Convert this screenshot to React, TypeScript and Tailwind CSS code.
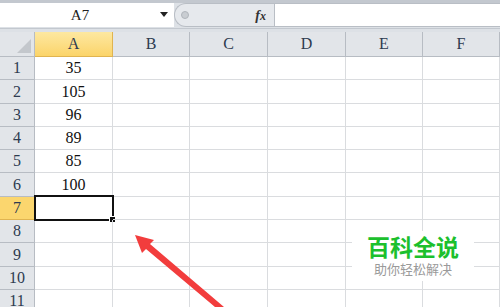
import React from 'react';

const cols = ['A', 'B', 'C', 'D', 'E', 'F'];
const colWidths = [78, 77, 78, 78, 77, 77];
const rowHeights = [23, 24, 23, 23, 23, 24, 23, 23, 24, 23, 23];
const values: Record<number, string> = { 1: '35', 2: '105', 3: '96', 4: '89', 5: '85', 6: '100' };

const serif = { fontFamily: '"Liberation Serif", "DejaVu Serif", serif' };
const cjk = { fontFamily: '"Noto Sans CJK SC", sans-serif' };

const FormulaBar = () => (
  <div className="h-[32px] bg-[#dde1e6] border-t-[3px] border-[#c3c8cf] flex flex-col">
    <div className="h-[24px] flex items-stretch">
      {/* name box */}
      <div className="w-[174px] bg-white flex items-center relative">
        <span className="w-[160px] text-center text-[15px] text-[#222]" style={serif}>
          A7
        </span>
        <span className="absolute left-[160px] top-[9px] w-0 h-0 border-l-[4px] border-r-[4px] border-t-[5px] border-l-transparent border-r-transparent border-t-[#222]" />
      </div>
      {/* splitter + fx */}
      <div className="w-[100px] bg-[#e6e9ed] flex items-center rounded-l-full border-l border-t border-b border-[#b9bec5]">
        <span className="ml-[6px] w-[8px] h-[8px] rounded-full bg-[#c9cdd2] border border-[#b0b5bb]" />
        <span className="ml-auto mr-[8px] text-[14px] italic font-bold text-[#333]" style={serif}>
          f<span className="text-[12px]">x</span>
        </span>
      </div>
      <div className="flex-1 bg-white border-l border-t border-b border-[#b9bec5]" />
    </div>
    <div className="h-[1px] mt-[1px] bg-[#c3c8cf]" />
  </div>
);

export default function App() {
  return (
    <div className="w-[500px] h-[307px] overflow-hidden bg-white relative" style={serif}>
      <FormulaBar />
      <div
        className="grid"
        style={{ gridTemplateColumns: `35px ${colWidths.map((w) => w + 'px').join(' ')}` }}
      >
        {/* header row */}
        <div className="h-[25px] bg-[#e2e5e9] border-r border-b border-[#b7bcc3] flex items-end justify-end p-[3px]">
          <svg width="14" height="14" viewBox="0 0 14 14">
            <polygon points="14,0 14,14 0,14" fill="#c3c7cc" />
          </svg>
        </div>
        {cols.map((c) => (
          <div
            key={c}
            className={
              c === 'A'
                ? 'h-[25px] flex items-center justify-center text-[16px] text-[#2d3b50] border-r border-b border-[#e0b450] bg-gradient-to-b from-[#fde8a0] to-[#fbd469]'
                : 'h-[25px] flex items-center justify-center text-[16px] text-[#2d3b50] border-r border-b border-[#b7bcc3] bg-[#e2e5e9]'
            }
          >
            {c}
          </div>
        ))}
        {rowHeights.map((h, i) => {
          const r = i + 1;
          return (
            <React.Fragment key={r}>
              <div
                className={
                  r === 7
                    ? 'flex items-center justify-center text-[16px] text-[#2d3b50] border-r border-b border-[#e0b450] bg-[#fbd66e]'
                    : 'flex items-center justify-center text-[16px] text-[#2d3b50] border-r border-b border-[#b7bcc3] bg-[#e2e5e9]'
                }
                style={{ height: h }}
              >
                {r}
              </div>
              {cols.map((c) => (
                <div
                  key={c}
                  className="flex items-center justify-center text-[16px] text-[#111] border-r border-b border-[#dadcdf] relative"
                  style={{ height: h }}
                >
                  {c === 'A' && values[r]}
                  {c === 'A' && r === 7 && (
                    <>
                      <div className="absolute left-[-1px] top-[-2px] right-[-2px] bottom-[-2px] border-[2px] border-[#111]" />
                      <div className="absolute right-[-4px] bottom-[-4px] w-[7px] h-[7px] bg-[#111] border border-white" />
                    </>
                  )}
                </div>
              ))}
            </React.Fragment>
          );
        })}
      </div>

      {/* red arrow annotation */}
      <svg className="absolute left-0 top-0 pointer-events-none" width="500" height="307" viewBox="0 0 500 307">
        <polygon
          points="135,235 154,240 150,244 224,307 215,307 146,249 142,253"
          fill="#f23d3d"
        />
      </svg>

      {/* watermark */}
      <div className="absolute left-[352px] top-[231px] w-[122px] h-[50px] bg-white flex flex-col items-center">
        <span className="text-[23px] leading-[30px] font-bold text-[#1cc02d]" style={cjk}>
          百科全说
        </span>
        <span className="text-[13px] leading-[16px] text-[#9a9a9a]" style={cjk}>
          助你轻松解决
        </span>
      </div>
    </div>
  );
}
